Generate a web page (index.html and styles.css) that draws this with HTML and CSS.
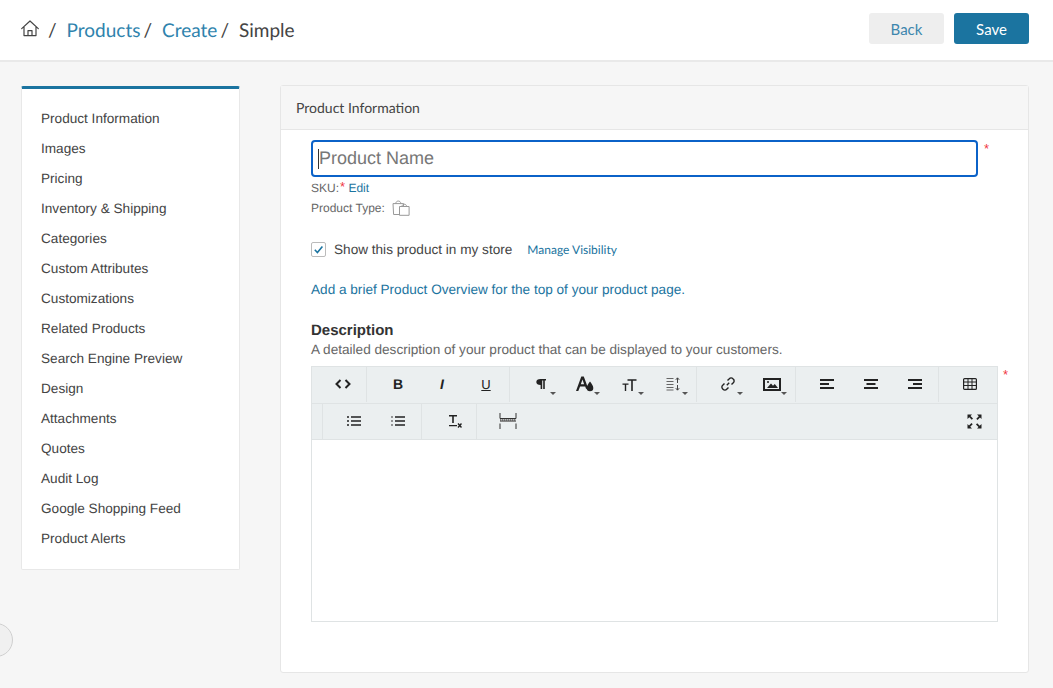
FILE: index.html
```html
<!DOCTYPE html>
<html lang="en">
<head>
<meta charset="utf-8">
<title>Create Simple Product</title>
<link rel="stylesheet" href="styles.css">
</head>
<body>
<header class="topbar">
  <nav class="crumbs">
    <svg class="home" viewBox="0 0 18 17" width="18" height="17"><path d="M.7 8.600 9 1l8.300 7.600M3 7v8.600h12V7M7 15.600v-5h4v5" fill="none" stroke="#444" stroke-width="1.200" stroke-linejoin="round" stroke-linecap="round"/></svg>
    <span class="sep s1">/</span>
    <a class="crumb">Products</a>
    <span class="sep s2">/</span>
    <a class="crumb">Create</a>
    <span class="sep s2">/</span>
    <span class="current">Simple</span>
  </nav>
  <div class="actions">
    <button class="btn back">Back</button>
    <button class="btn save">Save</button>
  </div>
</header>
<main class="layout">
  <aside class="side">
    <ul class="side-list">
      <li>Product Information</li>
      <li>Images</li>
      <li>Pricing</li>
      <li>Inventory &amp; Shipping</li>
      <li>Categories</li>
      <li>Custom Attributes</li>
      <li>Customizations</li>
      <li>Related Products</li>
      <li>Search Engine Preview</li>
      <li>Design</li>
      <li>Attachments</li>
      <li>Quotes</li>
      <li>Audit Log</li>
      <li>Google Shopping Feed</li>
      <li>Product Alerts</li>
    </ul>
  </aside>
  <section class="card">
    <h2 class="card-head">Product Information</h2>
    <div class="card-body">
      <div class="name-row">
        <div class="name-input"><span class="caret"></span><span class="placeholder">Product Name</span></div>
        <span class="req req-name">*</span>
      </div>
      <div class="meta">SKU:<span class="req req-sku">*</span> <a class="link">Edit</a></div>
      <div class="meta type">Product Type:
        <svg class="bags" viewBox="0 0 18 16" width="18" height="16"><path d="M7.500 14.500H1.600L1 3.600h10.600l-.1 2.600M3.800 3.600C3.800.2 8.800.2 8.800 3.600" fill="none" stroke="#999" stroke-width="1"/><path d="M7.500 6.500h9.600v8.800H7.500zM10 6.500c0-3 4.600-3 4.600 0" fill="none" stroke="#999" stroke-width="1"/></svg>
      </div>
      <div class="visible">
        <span class="check"><svg viewBox="0 0 15 15" width="15" height="15"><path d="m3.800 7.800 2.600 2.700 5-6" fill="none" stroke="#1b74a0" stroke-width="1.600"/></svg></span>
        <span class="visible-label">Show this product in my store</span>
        <a class="manage">Manage Visibility</a>
      </div>
      <a class="overview">Add a brief Product Overview for the top of your product page.</a>
      <h3 class="desc-title">Description</h3>
      <p class="desc-sub">A detailed description of your product that can be displayed to your customers.</p>
      <div class="editor-row">
        <div class="editor">
          <div class="tools">
            <div class="group">
              <span class="tool"><svg viewBox="0 0 16 10" width="16" height="10"><path d="M5.500 1 1.500 5l4 4M10.500 1l4 4-4 4" fill="none" stroke="#222" stroke-width="2"/></svg></span>
            </div>
            <div class="group">
              <span class="tool glyph bold">B</span>
              <span class="tool glyph ital">I</span>
              <span class="tool glyph under">U</span>
            </div>
            <div class="group">
              <span class="tool drop"><svg viewBox="0 0 10 12" width="10" height="12"><path d="M4.500 1H10v1.600H8.800V11H7.200V2.600H6.200V11H4.600V7C1.900 7 .3 5.800.3 4S1.900 1 4.500 1z" fill="#222"/></svg></span>
              <span class="tool drop"><svg viewBox="0 0 20 18" width="20" height="18"><path d="M1 16 6.300 1.500h2.500l4 11-1.600 1.700-1-2.800H5.100L3.300 16zM5.800 9.300h3.300L7.500 4.500z" fill="#222"/><path d="M15 6.500c1.500 2.200 3.300 4 3.300 6.500a3.300 3.300 0 0 1-6.600 0c0-2.500 1.800-4.300 3.300-6.500z" fill="#222"/></svg></span>
              <span class="tool drop"><svg viewBox="0 0 15 13" width="15" height="13"><path d="M5.500 1.200h9v1.500h-3.700V13H9.200V2.700H5.500zM.5 5.500h6v1.300H4.200V13H2.800V6.800H.5z" fill="#222"/></svg></span>
              <span class="tool drop"><svg viewBox="0 0 14 14" width="14" height="14"><path d="M.5 1.500h7M.5 4.500h7M.5 7.500h7M.5 10.500h7M.5 13h7" stroke="#666" fill="none"/><path d="M11.500 6V1M9.800 2.800l1.700-2 1.700 2M11.500 8v5M9.800 11.200l1.700 2 1.700-2" stroke="#444" fill="none"/></svg></span>
            </div>
            <div class="group">
              <span class="tool drop"><svg viewBox="0 0 14 14" width="14" height="14"><path d="M5.800 8.200 8.200 5.800M6.500 3.500l1.800-1.800a2.400 2.400 0 0 1 3.600 0l.4.400a2.400 2.400 0 0 1 0 3.600L10.500 7.500M7.500 10.500l-1.800 1.800a2.400 2.400 0 0 1-3.600 0l-.4-.4a2.400 2.400 0 0 1 0-3.600L3.500 6.500" fill="none" stroke="#222" stroke-width="1.400"/></svg></span>
              <span class="tool drop"><svg viewBox="0 0 18 13" width="18" height="13"><path d="M1 1h16v11H1z" fill="none" stroke="#222" stroke-width="2"/><path d="m4 10 4-4.500 2 2.300 1.800-1.800L15 10z" fill="#222"/><circle cx="5" cy="4" r="1" fill="#222"/></svg></span>
            </div>
            <div class="group">
              <span class="tool"><svg viewBox="0 0 14 10" width="14" height="10"><path d="M0 1h14M0 5h9M0 9h14" stroke="#222" stroke-width="2"/></svg></span>
              <span class="tool"><svg viewBox="0 0 14 10" width="14" height="10"><path d="M0 1h14M2.500 5h9M0 9h14" stroke="#222" stroke-width="2"/></svg></span>
              <span class="tool"><svg viewBox="0 0 14 10" width="14" height="10"><path d="M0 1h14M5 5h9M0 9h14" stroke="#222" stroke-width="2"/></svg></span>
            </div>
            <div class="group last">
              <span class="tool"><svg viewBox="0 0 14 12" width="14" height="12"><rect x=".6" y=".6" width="12.800" height="10.800" rx="1" fill="none" stroke="#222" stroke-width="1.200"/><path d="M.5 4h13M.5 7.500h13M5 1v10.500M9 1v10.500" stroke="#222"/></svg></span>
            </div>
          </div>
          <div class="tools second">
            <div class="group spacer"></div>
            <div class="group">
              <span class="tool"><svg viewBox="0 0 14 10" width="14" height="10"><path d="M0 1h2M0 5h2M0 9h2M4 1h10M4 5h10M4 9h10" stroke="#222" stroke-width="1.700"/></svg></span>
              <span class="tool"><svg viewBox="0 0 14 10" width="14" height="10"><path d="M0 1h2M0 5h2M0 9h2" stroke="#777" stroke-width="1.700"/><path d="M4 1h10M4 5h10M4 9h10" stroke="#222" stroke-width="1.700"/></svg></span>
            </div>
            <div class="group">
              <span class="tool clear"><svg viewBox="0 0 14 14" width="14" height="14"><path d="M1 1h8v1.500H5.800V9H4.200V2.500H1zM1 11h8v1.200H1z" fill="#222"/><path d="m10 9.500 3.500 4M13.500 9.500l-3.500 4" stroke="#222" stroke-width="1.400"/></svg></span>
            </div>
            <div class="group last">
              <span class="tool"><svg viewBox="0 0 18 16" width="18" height="16"><path d="M1 0v5.500h16V0M1 16v-5.500M17 16v-5.500" fill="none" stroke="#333" stroke-width="1"/><path d="M1 6.500h16V9H1z" fill="#888"/><path d="M1 7h16" stroke="#444" stroke-dasharray="1 1"/></svg></span>
            </div>
            <span class="tool full"><svg viewBox="0 0 15 15" width="15" height="15"><path d="M.5.500h4.500L3.500 2l2.500 2.500L4.800 5.700 2.300 3.200.5 5zM14.500.500V5L13 3.500 10.500 6 9.300 4.800 11.800 2.300 10 .5zM.5 14.500V10L2 11.500 4.500 9l1.200 1.200-2.500 2.500L5 14.500zM14.500 14.500H10l1.500-1.500L9 10.500l1.200-1.200 2.500 2.500 1.800-1.800z" fill="#222"/></svg></span>
          </div>
          <div class="editor-area"></div>
        </div>
        <span class="req req-editor">*</span>
      </div>
    </div>
  </section>
</main>
<div class="help-tab"></div>
</body>
</html>
```
FILE: styles.css
```css
* { box-sizing: border-box; }
html, body { height: 100%; }
body {
  margin: 0;
  background: #f6f6f6;
  font-family: "Liberation Sans", Arial, sans-serif;
  color: #444;
  overflow: hidden;
  text-rendering: geometricPrecision;
}
a { color: #1b74a0; }

.topbar {
  height: 62px;
  background: #fff;
  border-bottom: 2px solid #e9e9e9;
  display: flex;
  justify-content: space-between;
  padding: 13px 24px 0 21px;
}
.crumbs {
  display: flex;
  align-items: center;
  height: 34px;
  font-family: Lato, "Open Sans", sans-serif;
  font-size: 19px;
  color: #444;
}
.home { margin-top: -4px; }
.sep { font-size: 19px; }
.s1 { margin-left: 9px; }
.s2 { margin-left: 3px; }
.crumb { color: #2f83ad; margin-left: 10px; }
.current { margin-left: 10px; }

.actions { display: flex; gap: 10px; }
.btn {
  width: 75px;
  height: 31px;
  border: 0;
  border-radius: 3px;
  font-family: Lato, "Open Sans", sans-serif;
  font-size: 15px;
}
.back { background: #eeeeee; color: #3d86ad; }
.save { background: #1b74a0; color: #fff; }

.layout {
  display: flex;
  align-items: flex-start;
  gap: 40px;
  padding: 23px 24px 0 21px;
}
.side {
  width: 219px;
  margin-top: 1px;
  background: #fff;
  border: 1px solid #e8e8e8;
  border-top: 3px solid #1b74a0;
  border-radius: 2px;
  padding: 15px 0;
}
.side-list { list-style: none; margin: 0; padding: 0; }
.side-list li {
  height: 30px;
  line-height: 30px;
  padding-left: 19px;
  font-size: 13.600px;
  color: #444;
}

.card {
  width: 749px;
  height: 588px;
  background: #fff;
  border: 1px solid #e6e6e6;
  border-radius: 3px;
}
.card-head {
  margin: 0;
  height: 44px;
  line-height: 44px;
  padding-left: 15px;
  background: #f6f6f6;
  border-bottom: 1px solid #e6e6e6;
  font-family: Lato, "Open Sans", sans-serif;
  font-size: 14px;
  font-weight: 400;
  color: #444;
}
.card-body { padding: 10px 0 0 30px; }

.name-row { display: flex; align-items: flex-start; }
.name-input {
  width: 667px;
  height: 37px;
  border: 2px solid #0b62c8;
  border-radius: 4px;
  display: flex;
  align-items: center;
  padding-left: 5px;
}
.caret { width: 1px; height: 20px; background: #333; }
.placeholder { font-size: 18px; color: #777; }
.req { color: #f0343c; font-size: 13px; line-height: 1; }
.req-name { margin: 2px 0 0 6px; }
.req-sku { position: relative; top: -1px; margin-left: 1px; }
.req-editor { margin-left: 5px; margin-top: 2px; }

.meta {
  height: 20px;
  line-height: 20px;
  font-size: 12px;
  color: #666;
}
.name-row + .meta { margin-top: 1px; }
.type { display: flex; align-items: center; gap: 7px; }

.visible {
  display: flex;
  align-items: center;
  height: 18px;
  margin-top: 22px;
}
.check {
  width: 15px;
  height: 15px;
  border: 1px solid #bbb;
  border-radius: 2px;
  background: #fff;
  display: flex;
  align-items: center;
  justify-content: center;
}
.check svg { flex: none; }
.visible-label { margin-left: 8px; font-size: 13.600px; color: #444; }
.manage {
  margin-left: 15px;
  font-family: Lato, "Open Sans", sans-serif;
  font-size: 12px;
}
.overview {
  display: block;
  margin-top: 22px;
  font-size: 13.600px;
  line-height: 20px;
}
.desc-title {
  margin: 21px 0 0;
  font-size: 15px;
  line-height: 19px;
  font-weight: 700;
  color: #333;
}
.desc-sub {
  margin: 0;
  font-size: 13.600px;
  line-height: 20px;
  color: #666;
}

.editor-row { display: flex; align-items: flex-start; margin-top: 6px; }
.editor {
  width: 687px;
  border: 1px solid #dfe3e4;
  background: #fff;
}
.tools {
  display: flex;
  height: 37px;
  background: #ebeff0;
  border-bottom: 1px solid #dfe3e4;
}
.tools.second { height: 36px; }
.group {
  display: flex;
  padding: 0 1px 0 9px;
  border-right: 1px solid #dfe3e4;
  height: 35px;
}
.group.last { border-right: 0; }
.spacer { width: 11px; padding: 0; }
.tool {
  position: relative;
  width: 44px;
  height: 34px;
  display: flex;
  align-items: center;
  justify-content: center;
  color: #222;
}
.glyph { font-size: 14px; line-height: 1; }
.bold { font-weight: 700; }
.ital { font-style: italic; font-weight: 700; }
.under { text-decoration: underline; font-size: 13px; font-weight: 400; }
.drop::after {
  content: "";
  position: absolute;
  right: 7px;
  bottom: 6px;
  border: 3px solid transparent;
  border-top: 3px solid #555;
  border-bottom: 0;
}
.clear svg { margin-left: 4px; }
.full { margin-left: auto; margin-right: 1px; }
.editor-area { height: 181px; }

.help-tab {
  position: fixed;
  left: -21px;
  top: 623px;
  width: 34px;
  height: 34px;
  border-radius: 50%;
  background: #f0f0f0;
  border: 1px solid #cfcfcf;
}
```
